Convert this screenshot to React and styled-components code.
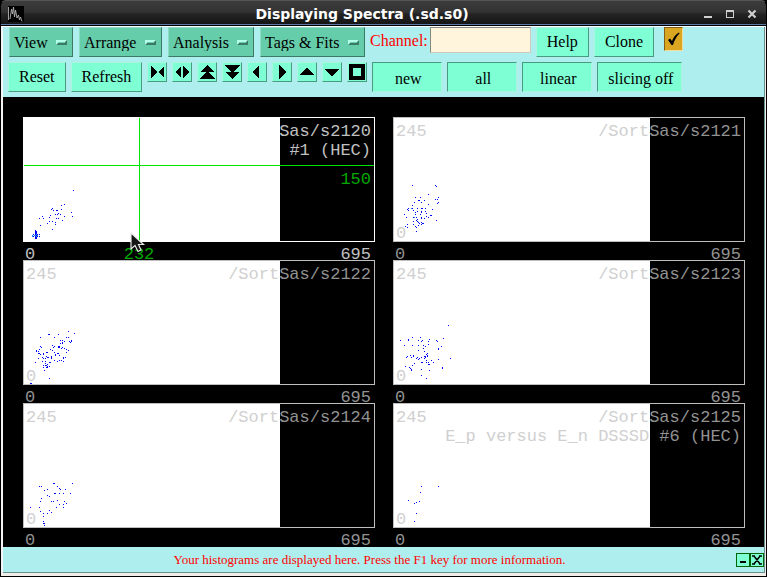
import React from 'react';
import styled, { createGlobalStyle, css } from 'styled-components';

const COLORS = {
  panel: '#afeeee',
  button: '#7fffd4',
  buttonLight: '#a9f5de',
  buttonDark: '#4a9a80',
  menu: '#66cdaa',
  menuLight: '#8edcc3',
  menuDark: '#3c7a65',
  entry: '#fff4dc',
  gold: '#daa520',
  red: '#ff0000',
  green: '#00e400',
  dimGreen: '#00a800',
  point: '#0000f5',
  frame: '#bebebe',
  onWhite: '#d0d0d0',
  onBlack: '#929292',
  onBlackActive: '#c0c0c0',
};

const GlobalStyle = createGlobalStyle`
  *, *::before, *::after {
    box-sizing: border-box;
  }

  body {
    margin: 0;
    background: #000;
  }

  button, input, select {
    margin: 0;
    font: inherit;
    color: inherit;
  }
`;

const raised = css`
  border: 1px solid;
  border-color: ${COLORS.buttonLight} ${COLORS.buttonDark} ${COLORS.buttonDark} ${COLORS.buttonLight};
`;

const sunken = css`
  border: 1px solid;
  border-color: ${COLORS.buttonDark} ${COLORS.buttonLight} ${COLORS.buttonLight} ${COLORS.buttonDark};
`;

const Window = styled.div`
  display: flex;
  flex-direction: column;
  min-height: 100vh;
  border-bottom: 1px solid #000;
  background: #000;
  font-family: 'Liberation Serif', 'Times New Roman', serif;
  font-size: 16px;
  color: #000;
`;

const TitleBar = styled.header`
  display: flex;
  align-items: center;
  height: 26px;
  padding: 1px 6px 0 7px;
  border: 1px solid #000;
  border-top-color: #555;
  border-radius: 6px 6px 0 0;
  background: linear-gradient(#3c3c3c, #333 45%, #242424 55%, #141414);
  box-shadow: inset 0 -1px 0 #5b7ba6;
`;

const Title = styled.h1`
  flex: 1;
  margin: 0;
  font: bold 14px/22px 'DejaVu Sans', sans-serif;
  text-align: center;
  color: #fff;
`;

const WindowControls = styled.div`
  display: flex;
  gap: 6px;
`;

const WindowButton = styled.button`
  display: grid;
  place-items: center;
  width: 16px;
  height: 16px;
  padding: 0;
  border: 0;
  background: none;
  color: #d0d0d0;
`;

const Body = styled.div`
  display: flex;
  flex: 1;
  flex-direction: column;
  margin: 0 1px;
  border: 1px solid #fff;
  border-left: 2px solid #f4f4f4;
  border-right: 1px solid #f0ece8;
  border-bottom: 3px solid #f0ece8;
`;

const Client = styled.div`
  display: flex;
  flex: 1;
  flex-direction: column;
  border: solid #68908f;
  border-width: 0 1px 1px 0;
`;

const Toolbar = styled.div`
  display: flex;
  flex-direction: column;
  gap: 5px;
  padding: 0 5px 5px;
  background: ${COLORS.panel};
`;

const ToolRow = styled.div`
  display: flex;
  align-items: flex-start;
  gap: 5px;
`;

const MenuGroup = styled.div`
  display: flex;
  gap: 6px;
  padding-left: 1px;
`;

const Menu = styled.label`
  display: grid;
  align-items: center;

  & > * {
    grid-area: 1 / 1;
  }
`;

const MenuSelect = styled.select`
  appearance: none;
  height: 30px;
  padding: 0 24px 0 4px;
  border: 1px solid;
  border-color: ${COLORS.menuLight} ${COLORS.menuDark} ${COLORS.menuDark} ${COLORS.menuLight};
  border-radius: 0;
  background: ${COLORS.menu};
`;

const MenuMark = styled.span`
  justify-self: end;
  width: 11px;
  height: 5px;
  margin-right: 6px;
  border: 2px solid;
  border-color: #b4ffe9 ${COLORS.menuDark} ${COLORS.menuDark} #b4ffe9;
  background: ${COLORS.menu};
  pointer-events: none;
`;

const ChannelField = styled.label`
  display: flex;
  gap: 2px;
  line-height: 27px;
  color: ${COLORS.red};
`;

const ChannelInput = styled.input`
  width: 101px;
  height: 26px;
  padding: 2px 4px;
  border: 1px solid;
  border-color: #8a8a7c #cfc8bc #cfc8bc #8a8a7c;
  background: ${COLORS.entry};
  color: #000;
`;

const Button = styled.button`
  ${raised}
  height: 30px;
  padding: 0 10px;
  background: ${COLORS.button};
`;

const ModeButton = styled.button`
  ${sunken}
  min-width: 70px;
  height: 30px;
  padding: 4px 8px 0 10px;
  background: ${COLORS.button};
`;

const ArrowButton = styled.button`
  ${raised}
  display: grid;
  place-items: center;
  width: 20px;
  height: 20px;
  padding: 0;
  background: ${COLORS.button};
`;

const Tick = styled.label`
  display: grid;
  place-items: center;
  margin: 0 0 0 5px;

  & > * {
    grid-area: 1 / 1;
  }

  svg {
    pointer-events: none;
  }
`;

const TickBox = styled.input`
  appearance: none;
  width: 19px;
  height: 24px;
  border: 1px solid;
  border-color: #82601a #f4dc9a #f4dc9a #82601a;
  background: ${COLORS.gold};
`;

const Canvas = styled.main`
  display: grid;
  flex: 1;
  grid-template-columns: 1fr 1fr;
  align-content: start;
  column-gap: 18px;
  padding: 20px 19px 1px 20px;
  background: #000;
  font: 17px/19px 'Liberation Mono', 'Courier New', monospace;
`;

const Plot = styled.section`
  color: ${({ $active }) => ($active ? COLORS.onBlackActive : COLORS.onBlack)};
`;

const Frame = styled.div`
  position: relative;
  display: grid;
  grid-template-columns: auto 1fr;
  grid-template-rows: auto 1fr;
  height: 125px;
  padding: 4px 3px 0 2px;
  border: 1px solid ${({ $active }) => ($active ? '#fff' : COLORS.frame)};
  background: linear-gradient(to right, #fff 256px, #000 256px);
  white-space: pre;
`;

const Scatter = styled.svg`
  position: absolute;
  inset: 0;
  width: 100%;
  height: 100%;
`;

const Heading = styled.div`
  grid-column: 2;
  grid-row: 1 / 3;
  z-index: 1;
  text-align: right;
`;

const LightText = styled.span`
  z-index: 1;
  color: ${COLORS.onWhite};
`;

const LowLabel = styled(LightText)`
  grid-row: 2;
  align-self: end;
  line-height: 15px;
`;

const MarkerLevel = styled.div`
  padding-top: 10px;
  color: ${COLORS.dimGreen};
`;

const Axis = styled.div`
  position: relative;
  display: flex;
  justify-content: space-between;
  height: 18px;
  padding: 0 4px 0 2px;
  line-height: 25px;
`;

const MarkerLabel = styled.span`
  position: absolute;
  left: 116px;
  transform: translateX(-50%);
  color: ${COLORS.dimGreen};
`;

const Pointer = styled.svg`
  position: absolute;
  left: 106px;
  top: 114px;
  z-index: 2;
`;

const StatusBar = styled.footer`
  display: flex;
  align-items: center;
  height: 25px;
  background: ${COLORS.panel};
`;

const StatusText = styled.p`
  flex: 1;
  margin: 0;
  font-size: 13px;
  text-align: center;
  color: ${COLORS.red};
`;

const StatusButton = styled.button`
  display: grid;
  place-items: center;
  width: 14px;
  height: 14px;
  padding: 0;
  border: 1px solid #006400;
  background: ${COLORS.button};
`;

const menus = ['View', 'Arrange', 'Analysis', 'Tags & Fits'];

const arrows = [
  { name: 'Contract', d: 'M4 4L10 10L4 16ZM17 4L11 10L17 16Z' },
  { name: 'Expand', d: 'M9 4L3 10L9 16ZM11 4L17 10L11 16Z' },
  { name: 'Page up', d: 'M10 3L17 10H3ZM10 9L18 17H2Z' },
  { name: 'Page down', d: 'M2 3H18L10 11ZM3 10H17L10 17Z' },
  { name: 'Left', d: 'M5 10L12 3V17Z' },
  { name: 'Right', d: 'M7 3L14 10L7 17Z' },
  { name: 'Up', d: 'M10 6L18 13H2Z' },
  { name: 'Down', d: 'M2 7H18L10 14Z' },
  { name: 'Full view', d: 'M2 2H18V18H2ZM6 6V14H14V6Z' },
];

const modes = ['new', 'all', 'linear', 'slicing off'];

// Points are "x,y" pixels from the inner top left corner of a frame.
// In a heading, `light` lies over the white area and `dark` over the black one.
const plots = [
  {
    lines: [{ dark: 'Sas/s2120' }, { dark: '#1 (HEC)' }],
    active: true,
    points:
      '49,72 40,86 37,87 28,90 27,91 29,92 37,91 32,92 33,92 47,94 31,96 34,95 33,96 36,96 48,98 40,98 26,97 25,99 18,98 19,100 15,100 32,100 34,100 38,102 25,103 28,103 31,104 31,106 23,105 16,107 28,111 11,112 11,113 12,113 11,114 12,114 11,115 12,115 9,116 11,116 13,116 15,116 12,117 11,118 9,118 13,118 15,118 11,119 12,119 11,120 12,120',
    hot: '8,118 8,117 10,117 11,117 13,117 12,118 12,116',
  },
  {
    lines: [{ light: '/Sort', dark: 'Sas/s2121' }],
    points:
      '18,67 41,67 42,68 34,76 21,79 26,79 44,79 41,81 43,81 24,82 25,82 30,82 20,84 27,84 44,84 43,85 34,86 18,87 13,91 14,90 14,92 18,90 19,92 23,90 27,90 28,90 31,90 38,91 21,94 23,93 27,93 27,94 31,93 32,95 10,96 21,96 26,96 32,98 36,97 37,97 34,99 12,99 19,99 20,99 22,99 27,99 27,100 30,100 23,101 22,102 23,103 24,104 25,105 27,104 28,105 29,105 27,106 19,103 19,106 24,107 21,108 22,109 13,106 11,108 13,109 22,113 42,102',
    hot: '17,90 20,99',
  },
  {
    lines: [{ light: '/Sort', dark: 'Sas/s2122' }],
    points:
      '44,70 50,72 24,73 25,73 34,73 16,76 30,76 42,76 44,76 36,79 38,79 38,81 40,80 45,80 46,81 47,79 47,80 38,82 36,82 28,84 30,85 29,86 16,85 17,86 34,85 35,85 34,86 35,86 37,87 38,86 40,87 42,88 44,89 15,88 26,88 28,89 12,89 12,90 14,90 14,92 15,92 16,93 19,92 22,91 23,91 30,91 31,93 31,94 33,92 34,92 42,91 35,94 19,93 22,95 27,95 27,96 18,96 14,97 19,97 21,97 23,96 24,96 27,97 39,96 41,96 39,97 37,99 33,100 35,99 39,100 30,99 18,100 21,100 11,101 21,102 25,101 26,101 19,104 21,104 22,104 23,103 19,106 23,105 22,106 23,106 25,105 20,109 25,117 6,122 7,122',
  },
  {
    lines: [{ light: '/Sort', dark: 'Sas/s2123' }],
    points:
      '54,64 49,77 6,79 18,76 26,76 14,78 14,79 24,79 27,80 28,79 35,78 34,80 42,79 43,80 10,84 18,84 24,84 29,84 31,85 34,83 47,85 29,87 44,87 44,88 24,89 30,90 33,92 32,93 33,94 16,94 13,95 12,96 17,96 19,94 19,95 30,95 31,95 31,96 33,95 22,97 23,96 25,97 24,98 27,96 30,97 56,97 44,98 32,99 37,99 27,101 28,101 32,101 34,101 39,101 20,102 34,103 35,103 18,104 11,105 15,106 16,107 17,108 17,109 27,108 35,109 48,106 48,107 27,114 32,117',
  },
  {
    lines: [{ light: '/Sort', dark: 'Sas/s2124' }],
    points:
      '48,79 29,79 30,79 15,82 17,82 33,82 35,84 36,85 41,85 23,85 20,86 30,89 31,89 35,89 39,89 46,89 23,91 25,92 17,94 16,97 27,97 29,97 33,96 40,97 42,99 35,100 39,100 39,103 32,103 6,103 15,103 16,107 25,106 27,108 23,109 19,109 19,112 19,117 19,119 20,119 20,121',
  },
  {
    lines: [
      { light: '/Sort', dark: 'Sas/s2125' },
      { light: 'E_p versus E_n DSSSD', dark: ' #6 (HEC)' },
    ],
    points: '27,82 44,82 26,88 14,96 25,97 22,98 20,99 22,109 20,117',
  },
];

const toPath = (points) =>
  points
    .split(' ')
    .map((point) => `M${point}h1v1h-1z`)
    .join('');

const MenuButton = ({ label }) => (
  <Menu>
    <MenuSelect aria-label={label}>
      <option>{label}</option>
    </MenuSelect>
    <MenuMark />
  </Menu>
);

const Histogram = ({ lines, points, hot, active }) => (
  <Plot $active={active}>
    <Frame $active={active}>
      <Scatter shapeRendering="crispEdges" aria-hidden="true">
        <path d={toPath(points)} fill={COLORS.point} />
        {hot && <path d={toPath(hot)} fill="#1e90ff" />}
        {active && (
          <g fill={COLORS.green}>
            <rect x="0" y="47" width="100%" height="1" />
            <rect x="115" y="0" width="1" height="100%" />
          </g>
        )}
      </Scatter>
      {!active && <LightText>245</LightText>}
      <Heading>
        {lines.map(({ light, dark }) => (
          <div key={dark}>
            {light && <LightText>{light}</LightText>}
            {dark}
          </div>
        ))}
        {active && <MarkerLevel>150</MarkerLevel>}
      </Heading>
      {!active && <LowLabel>0</LowLabel>}
      {active && (
        <Pointer width="16" height="21" viewBox="0 0 16 21" aria-hidden="true">
          <path
            d="M1 1V17L5 13.500L8 19.500L11 18L8.500 12.500H13.500Z"
            fill="#161616"
            stroke="#e8e8e8"
            strokeWidth="1.200"
          />
        </Pointer>
      )}
    </Frame>
    <Axis>
      <span>0</span>
      {active && <MarkerLabel>232</MarkerLabel>}
      <span>695</span>
    </Axis>
  </Plot>
);

const App = () => (
  <>
    <GlobalStyle />
    <Window>
      <TitleBar>
        <svg width="16" height="16" viewBox="0 0 16 16" aria-hidden="true">
          <rect width="16" height="16" fill="#000" />
          <path
            d="M0.500 1V14M2 13L3.500 3L4.500 8L5.500 1L6.500 11L7.500 4L9 12L10.500 9L11.500 14L12.500 11L14 15.500"
            fill="none"
            stroke="#b4b4b4"
            strokeWidth="0.900"
          />
        </svg>
        <Title>Displaying Spectra (.sd.s0)</Title>
        <WindowControls>
          <WindowButton aria-label="Minimize">
            <svg width="10" height="10" viewBox="0 0 10 10" fill="currentColor">
              <path d="M1 7H9V9H1Z" />
            </svg>
          </WindowButton>
          <WindowButton aria-label="Maximize">
            <svg width="10" height="10" viewBox="0 0 10 10" fill="currentColor">
              <path fillRule="evenodd" d="M1 1H9V9H1ZM2 3V8H8V3Z" />
            </svg>
          </WindowButton>
          <WindowButton aria-label="Close">
            <svg width="10" height="10" viewBox="0 0 10 10" stroke="currentColor" strokeWidth="2.200">
              <path d="M1.500 1.500L8.500 8.500M8.500 1.500L1.500 8.500" />
            </svg>
          </WindowButton>
        </WindowControls>
      </TitleBar>
      <Body>
        <Client>
          <Toolbar>
            <ToolRow>
              <MenuGroup>
                {menus.map((label) => (
                  <MenuButton key={label} label={label} />
                ))}
              </MenuGroup>
              <ChannelField>
                Channel:
                <ChannelInput type="text" />
              </ChannelField>
              <Button>Help</Button>
              <Button>Clone</Button>
              <Tick>
                <TickBox type="checkbox" defaultChecked aria-label="Keep on top" />
                <svg width="13" height="14" viewBox="0 0 13 14" aria-hidden="true">
                  <path d="M1 8L3 6.500L5 9C6.500 5 9 2 12 0.500L12.500 1.500C9.500 4.500 7.500 8 6 13H4.500Z" />
                </svg>
              </Tick>
            </ToolRow>
            <ToolRow>
              <Button>Reset</Button>
              <Button>Refresh</Button>
              {arrows.map(({ name, d }) => (
                <ArrowButton key={name} aria-label={name}>
                  <svg width="18" height="18" viewBox="1 1 18 18" shapeRendering="crispEdges">
                    <path fillRule={name === 'Full view' ? 'evenodd' : 'nonzero'} d={d} />
                  </svg>
                </ArrowButton>
              ))}
              {modes.map((mode) => (
                <ModeButton key={mode}>{mode}</ModeButton>
              ))}
            </ToolRow>
          </Toolbar>
          <Canvas>
            {plots.map((plot) => (
              <Histogram key={plot.lines[0].dark} {...plot} />
            ))}
          </Canvas>
          <StatusBar>
            <StatusText>
              Your histograms are displayed here. Press the F1 key for more information.
            </StatusText>
            <StatusButton aria-label="Hide message">
              <svg width="12" height="12" viewBox="0 0 12 12">
                <path d="M3 7H9V9H3Z" />
              </svg>
            </StatusButton>
            <StatusButton aria-label="Close message">
              <svg width="12" height="12" viewBox="0 0 12 12" stroke="#000" strokeWidth="1.500">
                <path d="M3 2L9 10M9 2L3 10M1 2H4M8 2H11M1 10H4M8 10H11" />
              </svg>
            </StatusButton>
          </StatusBar>
        </Client>
      </Body>
    </Window>
  </>
);

export default App;
